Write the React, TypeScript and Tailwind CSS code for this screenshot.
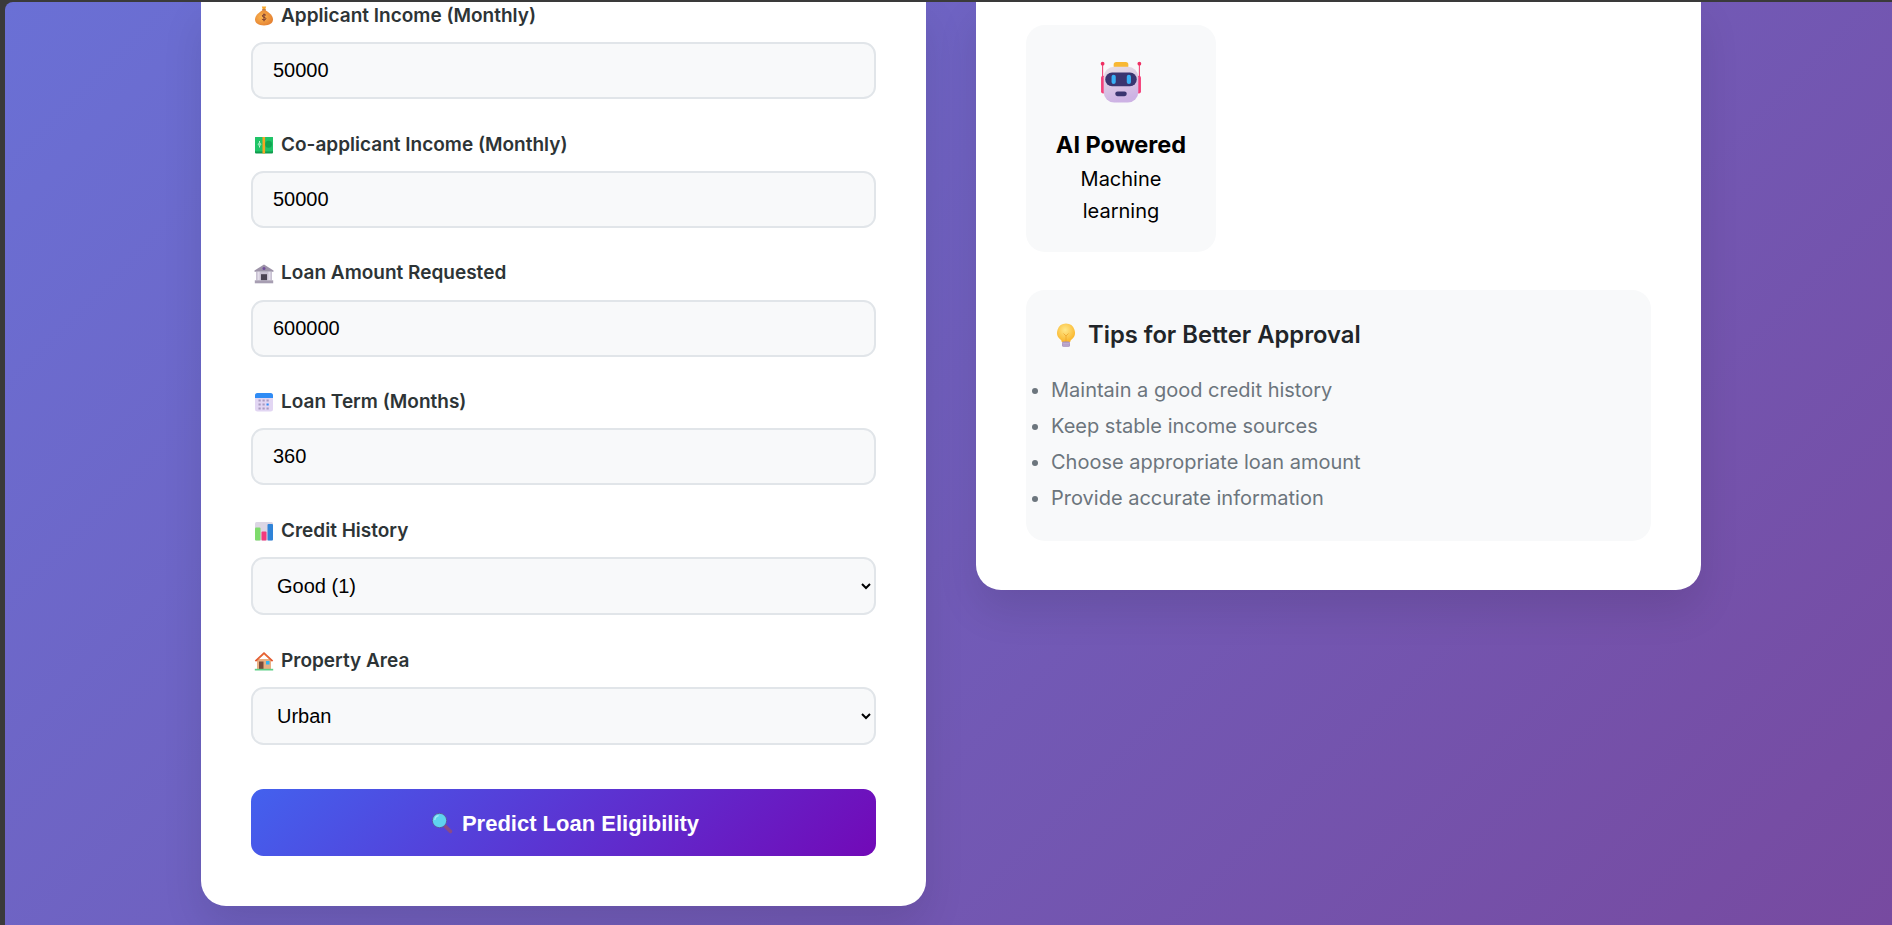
const Bag = () => (
  <svg viewBox="0 0 20 20" className="w-5 h-5 shrink-0">
    <defs>
      <radialGradient id="bag" cx="0.4" cy="0.45" r="0.7">
        <stop offset="0" stopColor="#fbb650" />
        <stop offset="1" stopColor="#e27a2e" />
      </radialGradient>
    </defs>
    <path d="M7.800 .5h4.400l-1 3H8.800z" fill="#f7a72a" />
    <rect x="8" y="3.200" width="4" height="1.500" rx="0.600" fill="#b9652c" />
    <path d="M8.200 4.500h3.600c3.400 1.800 7.200 5.300 7.200 9 0 3.800-3.500 5.900-9 5.900s-9-2.100-9-5.900c0-3.700 3.800-7.200 7.200-9z" fill="url(#bag)" />
    <path d="M12 9.300c-.5-.7-3.600-1-3.700.6-.1 1.600 3.600 1 3.600 2.800 0 1.600-3.300 1.400-4 .4M10 7.500v7.800" fill="none" stroke="#7a3a30" strokeWidth="1" />
  </svg>
);

const Cash = () => (
  <svg viewBox="0 0 20 20" className="w-5 h-5 shrink-0">
    <rect x="1" y="2" width="18" height="16.500" rx="1" fill="#0f9a4c" />
    <rect x="1" y="2" width="18" height="14.500" rx="1" fill="#1fc467" />
    <circle cx="14.500" cy="9.200" r="3.500" fill="#10a552" />
    <path d="M5.500 6v6.500" stroke="#c4f2d4" strokeWidth="1" />
    <circle cx="5.500" cy="9.200" r="1.800" fill="#8be3ad" />
    <rect x="8.500" y="2" width="2.600" height="16.500" fill="#f5a623" />
  </svg>
);

const Bank = () => (
  <svg viewBox="0 0 20 20" className="w-5 h-5 shrink-0">
    <path d="M10 .5 19.500 6.500v1.300H.5V6.500z" fill="#9d93a8" />
    <circle cx="10" cy="4.600" r="1.500" fill="#6f4c9b" />
    <rect x="2" y="7.800" width="16" height="8.500" fill="#c9c1d2" />
    <rect x="3.600" y="7.800" width="2" height="8.500" fill="#e3deea" />
    <rect x="14.400" y="7.800" width="2" height="8.500" fill="#e3deea" />
    <rect x="7" y="10.200" width="6" height="6.100" fill="#4b4453" />
    <rect x=".8" y="16.300" width="18.400" height="3" fill="#a79eb2" />
  </svg>
);

const Calendar = () => (
  <svg viewBox="0 0 20 20" className="w-5 h-5 shrink-0">
    <rect x="1" y="1" width="18" height="18.500" rx="2.500" fill="#e2d6f3" />
    <path d="M1 6V3.500A2.500 2.500 0 0 1 3.500 1h13A2.500 2.500 0 0 1 19 3.500V6z" fill="#2f8cf5" />
    {[4.5, 8.5, 12.5].map((y) =>
      [4.5, 8.5, 12.5].map((x) => (
        <rect key={`${x}-${y}`} x={x} y={y + 3} width="2.200" height="2" fill={x === 12.5 && y === 8.5 ? "#2f8cf5" : "#a99bc0"} />
      ))
    )}
  </svg>
);

const Chart = () => (
  <svg viewBox="0 0 20 20" className="w-5 h-5 shrink-0">
    <rect x="1" y="1" width="18" height="18.500" rx="1.500" fill="#dcd6e4" />
    <rect x="1" y="6.500" width="5.500" height="13" rx="1" fill="#7edb6c" />
    <rect x="7.500" y="10.500" width="5" height="9" rx="1" fill="#f23a7d" />
    <rect x="13.500" y="3" width="5.500" height="16.500" rx="1" fill="#2f83d8" />
  </svg>
);

const House = () => (
  <svg viewBox="0 0 20 20" className="w-5 h-5 shrink-0">
    <rect x="3" y="8" width="14" height="10" fill="#e8b083" />
    <path d="M10 1 .8 9.600l1.200 1.100L10 3.600l8 7.100 1.200-1.100z" fill="#e2572f" />
    <path d="M10 2.400 2.500 9.300 10 3.600l7.500 5.700z" fill="#f28a4a" />
    <rect x="5" y="10.500" width="4.500" height="7.500" fill="#7a4a3a" />
    <rect x="12" y="10" width="3.500" height="3.500" fill="#35b4f0" />
    <rect x=".8" y="17.800" width="18.400" height="1.700" fill="#5fcf87" />
  </svg>
);

const Magnifier = () => (
  <svg viewBox="0 0 22 22" className="w-[22px] h-[22px] shrink-0">
    <path d="M13.500 13.500 19.500 19.500" stroke="#8a4a86" strokeWidth="3.500" strokeLinecap="round" />
    <circle cx="8.500" cy="8.500" r="7.200" fill="#5fd3ef" stroke="#5a5aa0" strokeWidth="1" />
    <path d="M3.800 8a4.800 4.800 0 0 1 3.800-4.300" stroke="#a8ecfa" strokeWidth="1.200" fill="none" />
  </svg>
);

const Bulb = () => (
  <svg viewBox="0 0 20 24" className="w-[20px] h-[24px] shrink-0">
    <defs>
      <radialGradient id="glow" cx="0.45" cy="0.35" r="0.65">
        <stop offset="0" stopColor="#ffe88a" />
        <stop offset="1" stopColor="#fab52a" />
      </radialGradient>
    </defs>
    <path d="M10 .5a9 9 0 0 0-5.300 16.200c.8.700 1 1.500 1 2.300h8.600c0-.8.200-1.600 1-2.300A9 9 0 0 0 10 .5z" fill="url(#glow)" />
    <path d="M7.500 10.500l2.500 2.500 2.500-2.500M10 13v6" stroke="#eda52c" strokeWidth="0.800" fill="none" />
    <rect x="6" y="18.500" width="8" height="5.200" rx="1.500" fill="#a48ab8" />
    <path d="M6.300 20.200h7.400M6.300 22h7.400" stroke="#ddd0e6" strokeWidth="0.700" />
  </svg>
);

const Robot = () => (
  <svg viewBox="0 0 40 40" className="w-[42px] h-[42px]">
    <defs>
      <linearGradient id="head" x1="0" y1="0" x2="0.300" y2="1">
        <stop offset="0" stopColor="#e9e0e4" />
        <stop offset="1" stopColor="#cdb2e4" />
      </linearGradient>
    </defs>
    <path d="M2.500 2v18M37.500 2v18" stroke="#ef3a70" strokeWidth="1" />
    <circle cx="2.500" cy="2.500" r="1.800" fill="#ef2f62" />
    <circle cx="37.500" cy="2.500" r="1.800" fill="#ef2f62" />
    <rect x="1" y="14" width="4" height="17" rx="2" fill="#f43f7a" />
    <rect x="35" y="14" width="4" height="17" rx="2" fill="#f43f7a" />
    <rect x="13" y="1" width="14" height="6" rx="2.500" fill="#f8b834" />
    <rect x="3.500" y="5.500" width="33" height="34" rx="10" fill="url(#head)" />
    <rect x="5" y="11" width="30" height="13" rx="6.500" fill="#3a3570" />
    <rect x="11" y="13" width="4" height="9" rx="2" fill="#38b0f5" />
    <rect x="25.500" y="13" width="4" height="9" rx="2" fill="#38b0f5" />
    <rect x="14.500" y="29" width="11" height="4.500" rx="2.200" fill="#3a3570" />
  </svg>
);

const fields = [
  { icon: <Bag />, label: "Applicant Income (Monthly)", value: "50000" },
  { icon: <Cash />, label: "Co-applicant Income (Monthly)", value: "50000" },
  { icon: <Bank />, label: "Loan Amount Requested", value: "600000" },
  { icon: <Calendar />, label: "Loan Term (Months)", value: "360" },
];

const selects = [
  { icon: <Chart />, label: "Credit History", value: "Good (1)" },
  { icon: <House />, label: "Property Area", value: "Urban" },
];

const tips = [
  "Maintain a good credit history",
  "Keep stable income sources",
  "Choose appropriate loan amount",
  "Provide accurate information",
];

function Label({ icon, text }: { icon: React.ReactNode; text: string }) {
  return (
    <label className="flex items-center gap-[7.5px] h-[28px] pl-[2.5px] mb-[12px] text-[19px] font-semibold text-[#2d3436]">
      {icon}
      <span>{text}</span>
    </label>
  );
}

export default function App() {
  return (
    <div className="h-[925px] overflow-hidden bg-[#3a3a3a] pt-[2px] pl-[5px] font-['Inter',sans-serif]">
      <div className="h-full rounded-tl-[8px] overflow-hidden bg-[linear-gradient(135deg,#6a70d5_0%,#774aa0_100%)] pl-[196px] flex items-start gap-[50px]">
        <form className="w-[725px] shrink-0 bg-white rounded-b-[25px] px-[50px] pb-[50px] shadow-[0_20px_40px_rgba(0,0,0,0.1)]">
          {fields.map((f) => (
            <div key={f.label} className="mb-[31.75px]">
              <Label icon={f.icon} text={f.label} />
              <input
                type="text"
                defaultValue={f.value}
                className="w-full h-[57px] px-[20px] border-[2.5px] border-[#e1e5e9] rounded-[12.5px] bg-[#f8f9fa] text-[20px] text-black font-['Liberation_Sans',sans-serif]"
              />
            </div>
          ))}
          {selects.map((s) => (
            <div key={s.label} className="mb-[31.75px]">
              <Label icon={s.icon} text={s.label} />
              <select
                defaultValue={s.value}
                className="w-full h-[58px] px-[20px] border-[2.5px] border-[#e1e5e9] rounded-[12.5px] bg-[#f8f9fa] text-[20px] text-black font-['Liberation_Sans',sans-serif]"
              >
                <option>{s.value}</option>
              </select>
            </div>
          ))}
          <button
            type="button"
            className="w-full h-[67.5px] mt-[43.75px] pl-[3px] pt-[2px] flex items-center justify-center gap-[9px] rounded-[12.5px] bg-[linear-gradient(135deg,#4361ee,#7209b7)] text-white text-[22px] font-bold font-['Liberation_Sans',sans-serif]"
          >
            <Magnifier />
            <span>Predict Loan Eligibility</span>
          </button>
        </form>

        <aside className="w-[725px] shrink-0 bg-white rounded-b-[25px] px-[50px] pt-[23px] pb-[49px] shadow-[0_20px_40px_rgba(0,0,0,0.1)]">
          <div className="w-[190px] h-[227px] px-[25px] pt-[25px] rounded-[18.75px] bg-[#f8f9fa] text-center text-black text-[20px] leading-[32px]">
            <div className="h-[64px] mb-[12.5px] flex items-center justify-center">
              <Robot />
            </div>
            <h3 className="h-[36px] -mx-[10px] text-[23.5px] leading-[36px] font-bold">AI Powered</h3>
            <p>Machine learning</p>
          </div>

          <div className="mt-[38px] h-[251px] p-[25px] rounded-[18.75px] bg-[#f8f9fa]">
            <h3 className="flex items-center gap-[12px] h-[39px] pl-[5px] mb-[19.5px] text-[23.75px] font-semibold text-[#212529]">
              <Bulb />
              <span>Tips for Better Approval</span>
            </h3>
            <ul className="list-disc -ml-[25px] pl-[25px] text-[20px] text-[#6c757d]">
              {tips.map((t) => (
                <li key={t} className="leading-[32px] mb-[4px]">{t}</li>
              ))}
            </ul>
          </div>
        </aside>
      </div>
    </div>
  );
}
